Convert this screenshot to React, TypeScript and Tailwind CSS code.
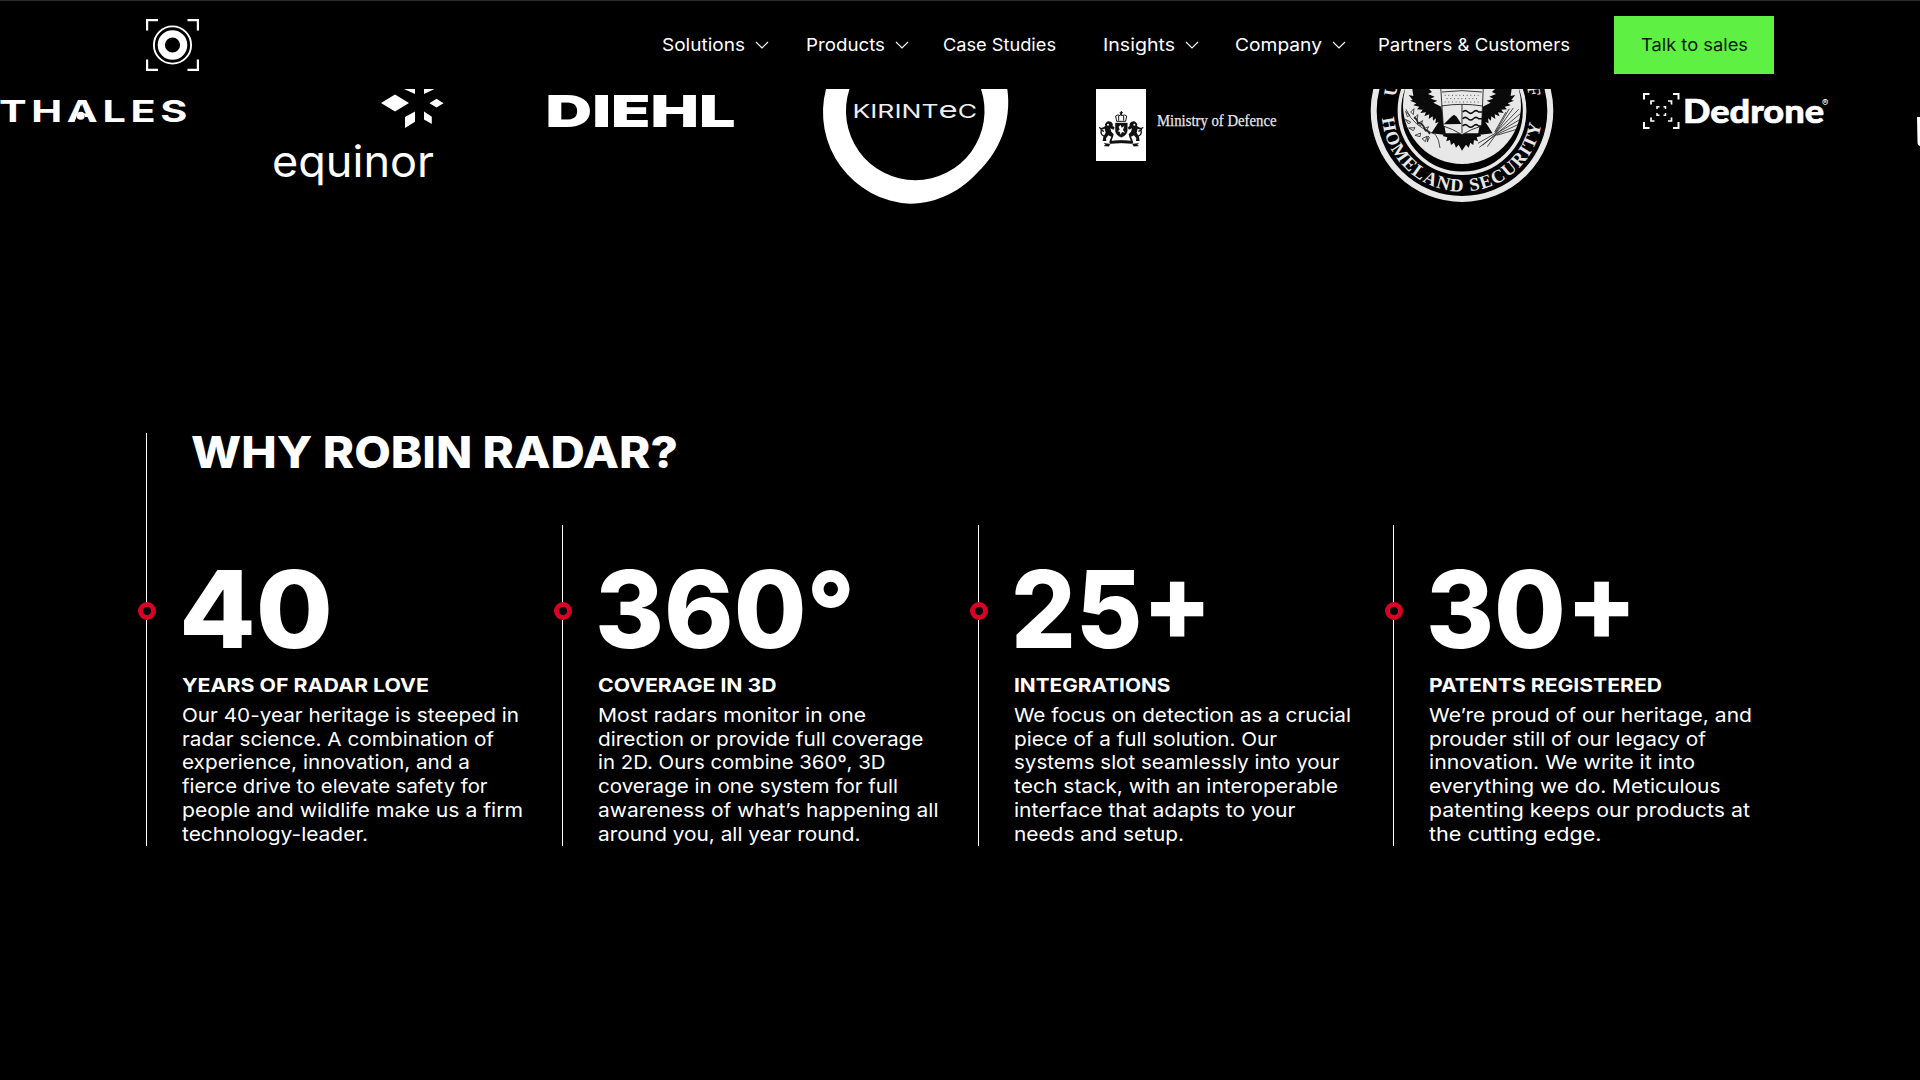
import { useLayoutEffect, useRef, useState } from "react";

/** Single line of text stretched horizontally to an exact width. */
function Fit({ text, width, className = "" }: { text: string; width: number; className?: string }) {
  const ref = useRef<HTMLSpanElement>(null);
  const [scale, setScale] = useState(1);
  useLayoutEffect(() => {
    const el = ref.current;
    if (el) {
      const prev = el.style.transform;
      el.style.transform = "none";
      setScale(width / el.getBoundingClientRect().width);
      el.style.transform = prev;
    }
  }, [width, text]);
  return (
    <span className={"block text-left " + className} style={{ width }}>
      <span ref={ref} className="inline-block origin-left whitespace-nowrap" style={{ transform: `scaleX(${scale})` }}>
        {text}
      </span>
    </span>
  );
}

const NAV = [
  { label: "Solutions", width: 83, menu: true, gap: "mr-[37px]" },
  { label: "Products", width: 79, menu: true, gap: "mr-[34px]" },
  { label: "Case Studies", width: 113, menu: false, gap: "mr-[47px]" },
  { label: "Insights", width: 72, menu: true, gap: "mr-[36px]" },
  { label: "Company", width: 87, menu: true, gap: "mr-[32px]" },
  { label: "Partners & Customers", width: 192, menu: false, gap: "mr-[44px]" },
];

const STATS = [
  {
    value: "40",
    valueWidth: 154,
    title: "YEARS OF RADAR LOVE",
    titleWidth: 247,
    lines: [
      ["Our 40-year heritage is steeped in", 337],
      ["radar science. A combination of", 312],
      ["experience, innovation, and a", 288],
      ["fierce drive to elevate safety for", 305.5],
      ["people and wildlife make us a firm", 341],
      ["technology-leader.", 186],
    ],
  },
  {
    value: "360°",
    valueWidth: 260,
    title: "COVERAGE IN 3D",
    titleWidth: 178.5,
    lines: [
      ["Most radars monitor in one", 268],
      ["direction or provide full coverage", 325.5],
      ["in 2D. Ours combine 360º, 3D", 287.5],
      ["coverage in one system for full", 300],
      ["awareness of what’s happening all", 340.5],
      ["around you, all year round.", 262.5],
    ],
  },
  {
    value: "25+",
    valueWidth: 201,
    title: "INTEGRATIONS",
    titleWidth: 156.5,
    lines: [
      ["We focus on detection as a crucial", 337],
      ["piece of a full solution. Our", 263],
      ["systems slot seamlessly into your", 325.5],
      ["tech stack, with an interoperable", 324],
      ["interface that adapts to your", 281.5],
      ["needs and setup.", 170],
    ],
  },
  {
    value: "30+",
    valueWidth: 211,
    title: "PATENTS REGISTERED",
    titleWidth: 233,
    lines: [
      ["We’re proud of our heritage, and", 323],
      ["prouder still of our legacy of", 277],
      ["innovation. We write it into", 266],
      ["everything we do. Meticulous", 291.5],
      ["patenting keeps our products at", 321],
      ["the cutting edge.", 172.5],
    ],
  },
];

function Chevron() {
  return (
    <svg className="ml-[10px] h-[8px] w-[14px]" viewBox="0 0 14 8" fill="none" stroke="white" strokeWidth="1.1">
      <path d="M1 1 L7 7 L13 1" />
    </svg>
  );
}

function RobinMark() {
  return (
    <svg className="h-[53px] w-[53px]" viewBox="146 19 53 53" fill="none" stroke="white">
      <path strokeWidth="2.2" d="M147.1 30.5V20.1H158 M187.5 20.1H197.9V30.5 M197.9 59.5V69.9H187.5 M158 69.9H147.1V59.5" />
      <circle cx="172.5" cy="45" r="18.6" strokeWidth="1.9" />
      <circle cx="172.5" cy="45" r="11.2" strokeWidth="7.2" />
    </svg>
  );
}

function Thales() {
  return (
    <svg className="h-[121px] w-[186px] shrink-0 overflow-visible" viewBox="0 89 186 121" fill="white">
      <text x="-1" y="122" fontFamily="Inter" fontWeight="700" fontSize="30.5" letterSpacing="3.4" textLength="193" lengthAdjust="spacingAndGlyphs">
        THALES
      </text>
      <path d="M74.5 122.5 L80.8 105 L87 122.5Z" fill="black" />
      <circle cx="80.7" cy="115.8" r="4" />
    </svg>
  );
}

function Equinor() {
  return (
    <svg className="h-[121px] w-[186px] shrink-0 overflow-visible" viewBox="274 89 186 121" fill="white">
      <path d="M381 103 395 94.5 409 103 395 111.5Z M429.5 103.2 436.5 98.8 443.5 103.2 436.5 107.5Z" />
      <path d="M404 89H415V94Z M424 89H434.5L424 94Z" />
      <path d="M405 117 415 111.6V121.8L405 128Z M424 111.6 431.8 116.7V124L424 119.4Z" />
      <text x="272" y="177" fontFamily="Inter" fontSize="43" textLength="162" lengthAdjust="spacingAndGlyphs">
        equinor
      </text>
    </svg>
  );
}

function Diehl() {
  return (
    <svg className="h-[121px] w-[186px] shrink-0 overflow-visible" viewBox="548 89 186 121" fill="white">
      <text x="545.5" y="127.4" fontFamily="Inter" fontWeight="900" fontSize="44" textLength="190" lengthAdjust="spacingAndGlyphs">
        DIEHL
      </text>
    </svg>
  );
}

function Kirintec() {
  return (
    <svg className="h-[121px] w-[186px] shrink-0 overflow-visible" viewBox="822 89 186 121" fill="white">
      <path d="M826 89 A91.5 91.5 0 0 0 910 203.7 C938 203.5 962 190 978 172 C999 152 1012 122 1007.3 89 H981 A69.3 69.3 0 1 1 849.5 89Z" />
      <text x="852.5" y="117.6" fontFamily="Inter" fontWeight="400" fontSize="18.5" fill="#eee" textLength="124.5" lengthAdjust="spacingAndGlyphs">
        KIRINT<tspan fontSize="23">e</tspan>C
      </text>
    </svg>
  );
}

function Ministry() {
  return (
    <svg className="h-[121px] w-[186px] shrink-0 overflow-visible" viewBox="1096 89 186 121">
      <rect x="1096" y="80" width="50" height="81" fill="white" />
      <g transform="translate(1080 80) scale(0.3333)" fill="#111" stroke="#111">
        <path d="M110 124 L107 108 Q114 102 120 107 L123 99 L127 107 Q134 102 140 108 L137 124Z" fill="white" strokeWidth="3" />
        <path d="M124 93V108 M119 98H129 M116 108V122 M131 108V122" strokeWidth="3" fill="none" />
        <path d="M106 129H142V152Q140 166 124 172Q108 166 106 152Z" />
        <path d="M116 140l6-5 3 8 8-5-4 12 6 8-9-2-4 8-3-9-6-1 6-5Z" fill="white" stroke="none" />
        <g id="lion">
          <path d="M78 128q6-7 14-3q8 4 6 12l6 6-4 6-9-4 3 10 7 8-2 8-4 10 5 7H88l2-9 4-9-9-4-7 9 1 8H68l2-13 7-12-3-12-8 3-5-4 9-3 6-4q-3-6 2-10Z" stroke="none" />
          <path d="M72 168q-12-4-8-18q-2-8-7-7 M62 150l10 4" fill="none" strokeWidth="4" />
          <circle cx="84" cy="134" r="3" fill="white" stroke="none" />
        </g>
        <use href="#lion" transform="translate(247 0) scale(-1 1)" />
        <path d="M90 184Q124 178 158 184V191Q124 187 90 191Z" />
        <path d="M72 190l18 2-3 7-15-1 5-4Z M176 190l-18 2 3 7 15-1-5-4Z" />
      </g>
      <text x="1157" y="126.4" fill="#e8e8e8" fontFamily="Liberation Serif" fontSize="16.8" stroke="#e8e8e8" strokeWidth="0.25" textLength="119.5" lengthAdjust="spacingAndGlyphs">
        Ministry of Defence
      </text>
    </svg>
  );
}

function HomelandSecurity() {
  return (
    <svg className="h-[121px] w-[186px] shrink-0 overflow-visible" viewBox="1370 89 186 121" fill="#e8e8e8">
      <defs>
        <path id="dhs-bottom" d="M1382 118.2 A80.3 80.3 0 0 0 1542 118.2" />
      </defs>
      <circle cx="1462" cy="110.7" r="88.3" fill="none" stroke="#e8e8e8" strokeWidth="6" />
      <circle cx="1462" cy="110.7" r="62.6" fill="none" stroke="#e8e8e8" strokeWidth="3.6" />
      <circle cx="1462" cy="105" r="59" />
      <text fontFamily="Liberation Serif" fontWeight="700" fontSize="18.5">
        <textPath href="#dhs-bottom" textLength="232" lengthAdjust="spacing">
          HOMELAND SECURITY
        </textPath>
      </text>
      <g fontFamily="Liberation Serif" fontWeight="700" fontSize="18">
        <text transform="translate(1395.5 97) rotate(-79)">U</text>
        <text transform="translate(1527 86.5) rotate(79)">F</text>
      </g>
      <g transform="translate(1350 80) scale(0.3333)">
        <g id="wing" fill="#0a0a0a">
          <path d="M186 20 L190 48 L176 45 L188 60 L180 62 L199 70 L190 76 L208 80 L201 88 L218 89 L211 99 L228 97 L223 109 L238 103 L236 117 L248 109 L249 122 L258 115 L256 130 L266 126 L244 160 L288 165 L274 80 L250 68 L262 62 L242 56 L254 50 L234 42 L246 36 L230 20Z" />
        </g>
        <use href="#wing" transform="translate(672 0) scale(-1 1)" />
        <path fill="#0a0a0a" d="M284 160H388L394 168 380 172 384 184 372 180 370 195 361 188 356 203 348 194 336 212 326 194 318 203 312 188 303 195 300 180 289 184 292 172 278 168Z" />
        <path d="M272 20H400L395 138Q366 146 336 164Q306 146 280 138Z" stroke="#111" strokeWidth="2.5" />
        <path d="M274 78Q336 68 398 78 M336 74V160 M276 36Q336 28 396 36" fill="none" stroke="#111" strokeWidth="2.5" />
        <path d="M284 46H390 M290 56H384 M284 66H390" fill="none" stroke="#555" strokeWidth="3" strokeDasharray="3 8" />
        <path d="M281 133 304 110 312 104 320 110 334 132Z" fill="#0a0a0a" />
        <path d="M338 96q8-8 16 0t16 0t16 0l10 0 M338 116q8-8 16 0t16 0t16 0l10 0 M338 138q8-8 16 0t16 0t16 0l8 0" fill="none" stroke="#0a0a0a" strokeWidth="4.5" />
        <g fill="none" stroke="#222" strokeWidth="2.4">
          <path d="M168 88Q190 140 256 163Q268 178 270 204" />
          <path d="M172 110l-5-16 12 12Z M182 96l10-10-2 18Z M176 132l-10-14 16 8Z M192 114l12-10-3 17Z M190 152l-14-8 19-1Z M204 130l14-8-6 16Z M210 170l-15-4 17-7Z M222 146l14-6-8 15Z M226 185l-10-9 15-7Z M238 172l-6 14 2-18Z" />
          <path d="M192 112q10 4 12 20 M206 128q12 2 18 18 M222 148q10 0 18 14" strokeWidth="5" />
          <path d="M384 190L436 160 L506 88 M388 202L438 163 512 100 M398 196L440 160 514 116 M412 200L437 165 508 132 M436 160L490 84 M436 158L478 86 M434 156L468 96 M440 166L500 148" />
        </g>
      </g>
    </svg>
  );
}

function Dedrone() {
  return (
    <svg className="h-[121px] w-[186px] shrink-0 overflow-visible" viewBox="1644 89 186 121" fill="white">
      <g fill="none" stroke="white">
        <path strokeWidth="2" d="M1644 99.5V94H1649.5 M1673 94H1678.5V99.5 M1678.5 122V128H1673 M1649.5 128H1644V122" />
        <path strokeWidth="1.7" d="M1651 104.5V101H1654.5 M1668 101H1671.5V104.5 M1671.5 117.5V121H1668 M1654.5 121H1651V117.5" />
        <path strokeWidth="1.5" d="M1657 109V106.7H1659.5 M1663.5 106.7H1665.5V109 M1665.5 113V115.3H1663.5 M1659.5 115.3H1657V113" />
      </g>
      <text x="1683" y="122.6" fontFamily="Lato" fontWeight="900" fontSize="32" stroke="white" strokeWidth="0.6" textLength="141" lengthAdjust="spacingAndGlyphs">
        Dedrone
      </text>
      <text x="1822" y="105.5" fontFamily="Inter" fontSize="9.5">
        ®
      </text>
    </svg>
  );
}

function NextPartner() {
  return (
    <svg className="h-[121px] w-[186px] shrink-0 overflow-visible" viewBox="1918 89 186 121" fill="white">
      <path d="M1917 117H1960V146H1921Q1917.5 146 1917.5 142Z" />
    </svg>
  );
}

export default function App() {
  return (
    <div className="h-[1080px] w-[1920px] overflow-hidden bg-black font-['Inter',sans-serif] text-white">
      <header className="flex h-[89px] items-center border-t border-[#2b2b2b] pl-[146px]">
        <RobinMark />
        <nav className="ml-[463px] flex items-center text-[17.5px] leading-6">
          {NAV.map((item) => (
            <a key={item.label} className={"flex items-center " + item.gap}>
              <Fit text={item.label} width={item.width} />
              {item.menu && <Chevron />}
            </a>
          ))}
        </nav>
        <button className="flex h-[58px] w-[160px] items-center justify-center bg-[#5ef043] text-[17.5px] text-[#0b1a08]">
          <Fit text="Talk to sales" width={107} />
        </button>
      </header>

      <div className="flex h-[121px] w-full gap-[88px] overflow-hidden">
        <Thales />
        <Equinor />
        <Diehl />
        <Kirintec />
        <Ministry />
        <HomelandSecurity />
        <Dedrone />
        <NextPartner />
      </div>

      <section className="ml-[146px] mt-[223px] w-[1663px]">
        <div className="h-[92px] border-l border-white pl-[44px]">
          <h2 className="text-[44px] font-extrabold leading-[38px]">
            <Fit text="WHY ROBIN RADAR?" width={487} />
          </h2>
        </div>
        <div className="grid grid-cols-[416px_416px_415px_416px]">
          {STATS.map((stat) => (
            <article key={stat.title} className="relative h-[321px] border-l border-white pl-[35px] pt-6">
              <span className="absolute -left-[9px] top-[77px] size-[18px] rounded-full border-[5px] border-[#d90026] bg-black" />
              <div className="-ml-[3px] text-[107px] font-extrabold leading-[120px]">
                <Fit text={stat.value} width={stat.valueWidth} />
              </div>
              <h3 className="mb-[3px] text-[19.3px] font-bold leading-8">
                <Fit text={stat.title} width={stat.titleWidth} />
              </h3>
              <p className="text-[19px] leading-[23.7px]">
                {stat.lines.map(([line, width]) => (
                  <Fit key={line} text={line as string} width={width as number} />
                ))}
              </p>
            </article>
          ))}
        </div>
      </section>
    </div>
  );
}
